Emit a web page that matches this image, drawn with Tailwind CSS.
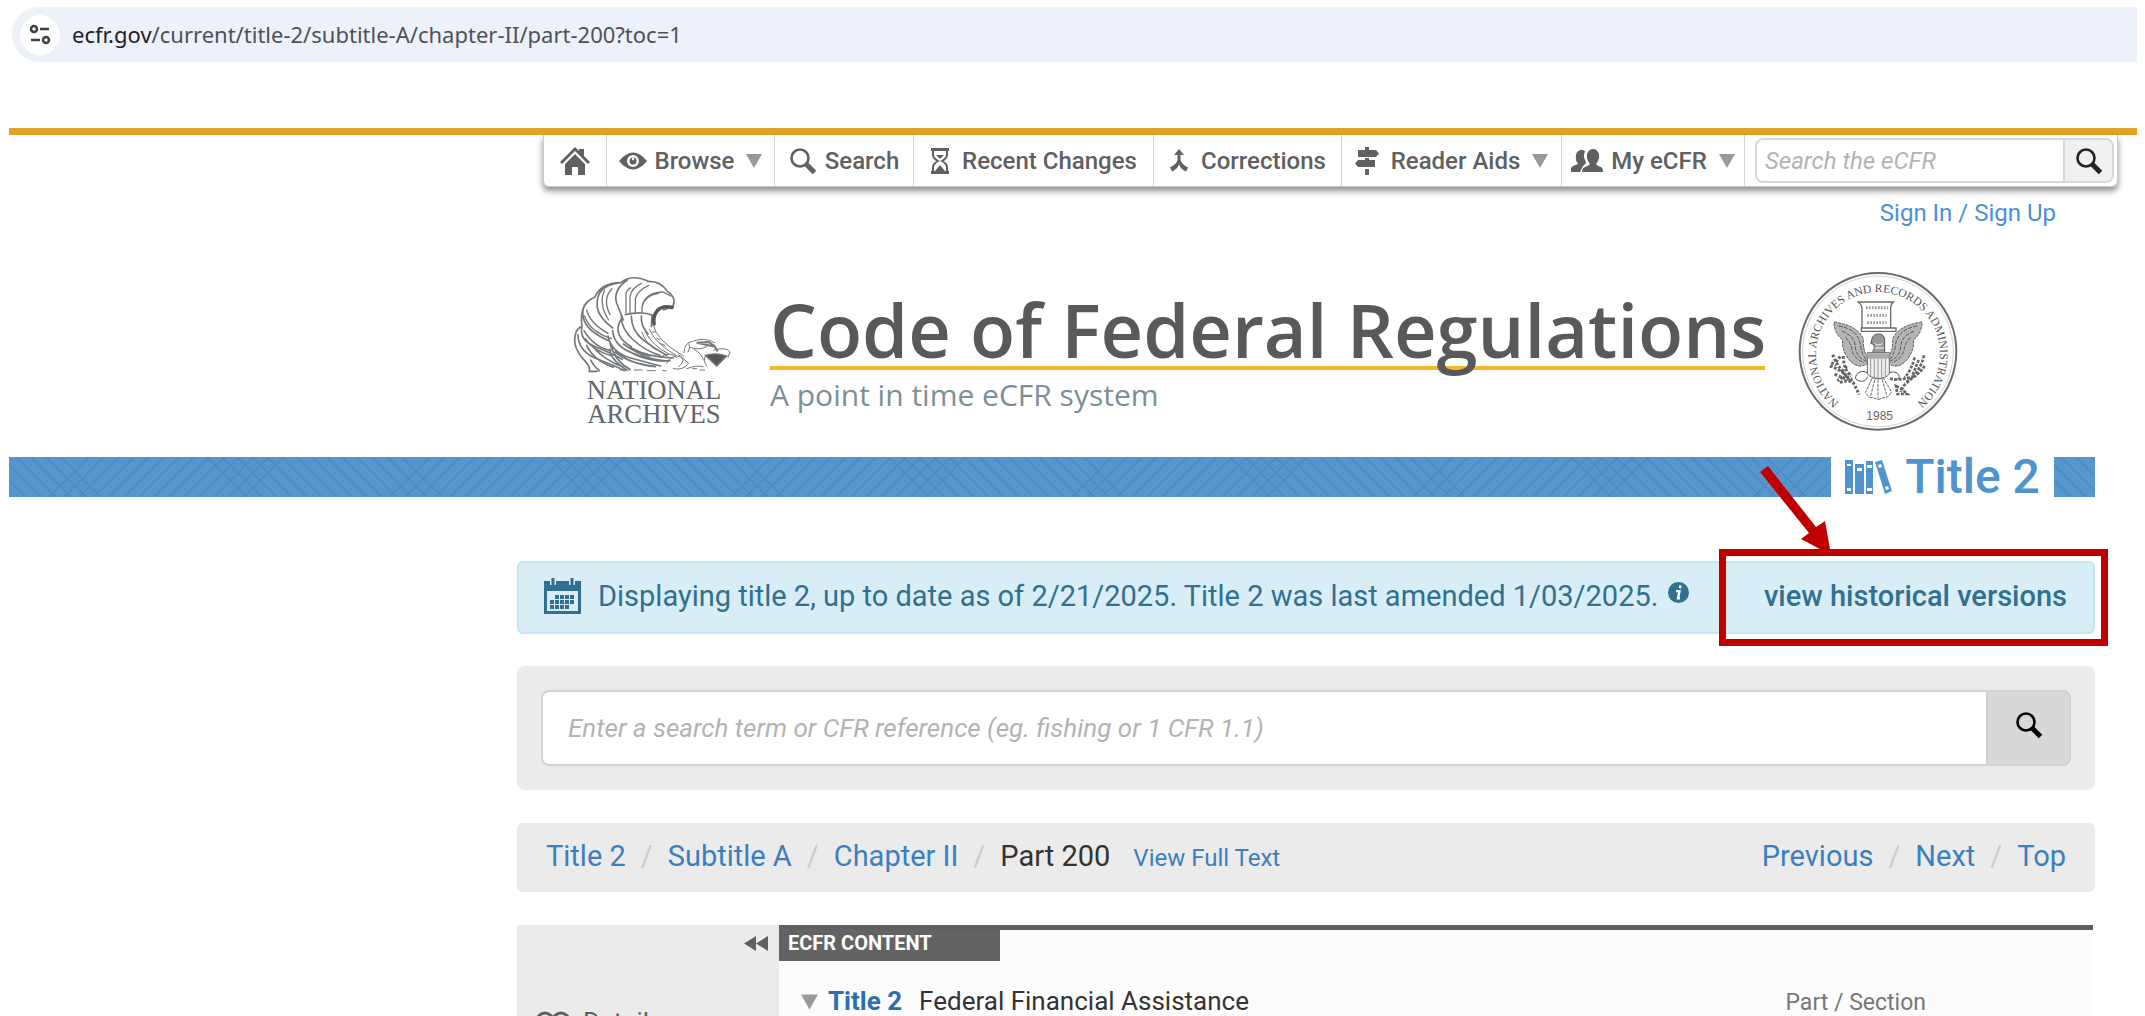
<!DOCTYPE html>
<html lang="en">
<head>
  <meta charset="UTF-8">
  <title>eCFR :: 2 CFR Part 200</title>
  <script src="https://cdn.jsdelivr.net/npm/@tailwindcss/browser@4"></script>
</head>
<body class="bg-white font-['Roboto',sans-serif] h-screen overflow-hidden">
  <!-- Shared icons and band pattern -->
  <svg class="absolute size-0" aria-hidden="true">
    <symbol id="search" viewBox="0 0 28 28">
      <circle cx="11" cy="11" r="8.5" fill="none" stroke="currentColor" stroke-width="2.6"/>
      <path d="M17 17l8.500 8.500" fill="none" stroke="currentColor" stroke-width="5"/>
    </symbol>
    <symbol id="caret" viewBox="0 0 16 14"><path d="M0 0h16L8 14z" fill="currentColor"/></symbol>
    <pattern id="weave" width="341" height="40" patternUnits="userSpaceOnUse">
      <rect width="341" height="40" fill="#5596cf"/>
      <path stroke="#4c8ac2" stroke-width="1.500" fill="none" d="M198 0l40 40M213 0l40 40M228 0l40 40M243 0l40 40M258 0l40 40M273 0l40 40M288 0l40 40M303 0l40 40M318 0l40 40M333 0l40 40M-23 0l40 40M-8 0l40 40M-38 0l40 40M7 0l40 40M22 0l40 40M37 0l40 40M52 0l40 40M80 0l-40 40M95 0l-40 40M110 0l-40 40M125 0l-40 40M140 0l-40 40M155 0l-40 40M170 0l-40 40M185 0l-40 40M200 0l-40 40M215 0l-40 40M230 0l-40 40M245 0l-40 40M260 0l-40 40M275 0l-40 40"/>
    </pattern>
  </svg>

  <!-- Address bar -->
  <div class="mt-[7px] ml-3 mr-2 h-[55px] bg-[#ecf1fa] rounded-l-full flex items-center gap-3 pl-2">
    <span class="size-10 rounded-full bg-white flex items-center justify-center">
      <svg class="size-6" viewBox="0 0 24 24" fill="none" stroke="#3c3f43" stroke-width="2.500">
        <circle cx="6" cy="6" r="3"/><path d="M12 6h9M3 17h9"/><circle cx="18" cy="17" r="3"/>
      </svg>
    </span>
    <p class="font-['Noto_Sans',sans-serif] text-[22px] text-[#4d5156]"><span class="text-[#1f2023]">ecfr.gov</span>/current/title-2/subtitle-A/chapter-II/part-200?toc=1</p>
  </div>

  <header class="mt-[66px] ml-[9px]">
    <div class="h-[7px] mr-2 bg-[#e2a225]"></div>
    <nav class="flex justify-end pr-[27px]">
      <div class="flex h-[52px] bg-white rounded-b-md border border-t-0 border-[#ccc] shadow-[0_4px_6px_rgba(0,0,0,0.450)] text-2xl font-medium text-[#606060] divide-x divide-[#d4d4d4]">
        <a href="#" aria-label="Home" class="w-[63px] flex items-center justify-center">
          <svg class="size-8" viewBox="0 0 32 32" fill="currentColor"><path d="M16 2l4 4V4h5v7l6 6-2 2L16 6 3 19l-2-2z"/><path d="M16 9l10 10v11h-7v-8h-6v8H6V19z"/></svg>
        </a>
        <a href="#" class="w-[168px] flex items-center justify-center gap-2">
          <svg class="w-7 h-6" viewBox="0 0 28 24"><path d="M0 12Q14-5 28 12Q14 29 0 12z" fill="currentColor"/><circle cx="14" cy="12" r="6" fill="#fff"/><circle cx="14" cy="12" r="3.500" fill="currentColor"/><circle cx="14" cy="10" r="1.200" fill="#fff"/></svg>
          Browse
          <svg class="w-4 h-3.5 ml-1 text-[#999]"><use href="#caret"/></svg>
        </a>
        <a href="#" class="w-[139px] flex items-center justify-center gap-2"><svg class="size-7"><use href="#search"/></svg>Search</a>
        <a href="#" class="w-[240px] flex items-center justify-center gap-3">
          <svg class="w-5 h-7" viewBox="0 0 20 28" fill="none" stroke="currentColor"><path d="M1 2.500h18M1 25.500h18" stroke-width="3"/><path d="M3 4v4q0 3 5 6q-5 3-5 6v4M17 4v4q0 3-5 6q5 3 5 6v4" stroke-width="2"/><path d="M6 8h8l-4 4zM10 18l5 6H5z" fill="currentColor" stroke="none"/></svg>
          Recent Changes
        </a>
        <a href="#" class="w-[188px] flex items-center justify-center gap-3">
          <svg class="w-5 h-6" viewBox="0 0 20 24"><path d="M10 0l5 6h-3.500v5q1 4 7.500 7.500l-2 4q-5-2-7-7q-2 5-7 7l-2-4Q7.500 15 8.500 11V6H5z" fill="currentColor"/></svg>
          Corrections
        </a>
        <a href="#" class="w-[220px] flex items-center justify-center gap-3">
          <svg class="w-6 h-7" viewBox="0 0 24 28" fill="currentColor"><path d="M10 0h4v3h-4zM3 3h18l3 3.500-3 3.500H3zM10 11h4v2h-4zM3 13h17v7H3l-3-3.500zM10 22h4v6h-4z"/></svg>
          Reader Aids
          <svg class="w-4 h-3.5 text-[#999]"><use href="#caret"/></svg>
        </a>
        <a href="#" class="w-[183px] flex items-center justify-center gap-2">
          <svg class="w-8 h-6" viewBox="0 0 32 24" fill="currentColor"><path d="M0 23v-4q1-2 7-4q-3-4-2-9q1-5 6-5q2 0 3 1q-2 5 0 9q1 2 1 3l-3 3-3 6z"/><path d="M11 23q0-4 3-5q4-1 5-3q-4-5-3-10q2-5 6-5t6 5q1 5-3 10q1 2 5 3q2 1 2 5z"/></svg>
          My eCFR
          <svg class="w-4 h-3.5 ml-1 text-[#999]"><use href="#caret"/></svg>
        </a>
        <form class="flex py-[3px] pl-[10px] pr-[3px]">
          <input type="text" aria-label="Search the eCFR" placeholder="Search the eCFR" class="w-[310px] border-2 border-[#d8d8d8] rounded-l-lg px-2 font-normal italic placeholder:text-[#b3b3b3] min-w-0">
          <button type="button" aria-label="Search" class="w-[49px] border-2 border-l-0 border-[#d8d8d8] rounded-r-lg bg-[#f0f0f0] text-[#222] flex items-center justify-center"><svg class="size-7"><use href="#search"/></svg></button>
        </form>
      </div>
    </nav>
    <p class="mt-[10px] text-right pr-[89px] text-2xl text-[#4a90d2]"><a href="#">Sign In</a> / <a href="#">Sign Up</a></p>

    <div class="mt-[31px] flex justify-end pr-[165px]">
      <!-- National Archives eagle -->
      <svg class="w-[200px] h-[180px]" viewBox="0 0 600 540" fill="none" stroke="#75787b" stroke-width="4" stroke-linecap="round">
        <path stroke-width="5" d="M112 334H88q4-12-12-30Q36 262 46 224q4-20 20-24Q56 132 104 112Q124 68 182 68Q214 42 262 62M262 64q40-2 60 30q30 20 16 46l-28 10M182 68Q104 76 112 142q4 30 46 62M202 60Q158 90 170 130l20 50M104 112Q60 130 70 174q10 40 76 68M66 200q-10 40 40 60t80 38M54 224q0 50 60 74t80 34"/>
        <path d="M210 158V110q4-26 34-40M226 160v-44q6-24 40-40M198 158V100q6-14 14-16M246 156q-4-56 62-60l24 12M246 140q8-34 50-40M156 86q-30 30-6 78M134 90q-20 40 12 90M80 150q10 40 64 70M74 168q14 46 80 68"/>
        <path stroke-width="5" d="M196 164q50-12 82 2M184 166q-2 40 36 74t80 46M214 168q0 44 36 72t70 46M244 168q-2 30 20 54M276 166l-2 34M184 176q-30 50 30 84"/>
        <path stroke="#55585b" stroke-width="11" d="M336 142q-30-6-44 10t-10 40"/>
        <path stroke-width="3" d="M280 196q8 44 90 92M268 208q16 40 80 78M256 216q20 40 70 66M276 216h10M290 234l10 6M262 226l8 10M300 250l14 6M246 216q10 34 40 52"/>
        <path stroke-width="5" d="M144 228q10 50 68 66t90 24M158 212q4 54 80 74t90 16M150 250q16 56 60 78M166 276q40 34 120 44M150 268q0 30 50 62M210 262q50 30 130 32M220 282q60 26 110 20M190 252q40 30 80 36M100 262q30 36 90 60M72 212q30 50 80 60M76 236q20 34 80 52M80 256q20 44 80 66M92 300q10 20 26 32"/>
        <path stroke-width="3" d="M180 330h28M222 330h24M262 332h24M308 332h10M320 310q20-30 40-20t-4 30M300 292q30-20 50 0M340 326q30 6 44-14M356 284l30 26M372 278q0-30 26-34q36-14 66 4M384 250q10 6 0 26M390 262q26 10 50-2M402 268q24 12 28 32M380 326q30-12 50-6M398 326h12M420 330h14"/>
        <path stroke-width="6" d="M410 248l56 12-20-14zM464 260l8 12"/>
        <path d="M436 286q32-10 64 2l-30 30z" fill="#55585b"/><path stroke-width="3" d="M462 270q40-10 48 6l-6 16M436 288q-8 14 4 30"/>
        <text x="282" y="416" text-anchor="middle" font-family="Liberation Serif, serif" font-size="80" fill="#63666a" stroke="none">NATIONAL</text>
        <text x="282" y="489" text-anchor="middle" font-family="Liberation Serif, serif" font-size="80" fill="#63666a" stroke="none">ARCHIVES</text>
      </svg>

      <div class="ml-[10px] pt-[33px] w-[995px] whitespace-nowrap">
        <h1 class="font-['Open_Sans',sans-serif] font-semibold text-[74px] leading-[73px] text-[#58595b] border-b-4 border-[#f9b52c]">Code of Federal Regulations</h1>
        <p class="mt-1 font-['Open_Sans',sans-serif] text-[30px] leading-[42px] text-[#7b8f96]">A point in time eCFR system</p>
      </div>

      <!-- Agency seal -->
      <svg class="ml-[15px] w-[200px] h-[190px] -mt-1 -mb-[6px]" viewBox="0 0 600 570" fill="none" stroke="#6b6b6b" stroke-width="3">
        <circle cx="294" cy="286" r="235" stroke-width="6"/><circle cx="294" cy="286" r="226" stroke="#bbb" stroke-width="2"/>
        <path id="ring" d="M195 452A186 186 0 1 1 393 452" stroke="none"/>
        <text font-family="Liberation Serif, serif" font-size="35" fill="#555" stroke="none"><textPath href="#ring" startOffset="50%" text-anchor="middle">NATIONAL ARCHIVES AND RECORDS ADMINISTRATION</textPath></text>
        <text x="299" y="492" text-anchor="middle" font-family="Liberation Sans, sans-serif" font-size="36" fill="#666" stroke="none">1985</text>
        <path d="M232 138h108q-10 10-8 24v52M246 214v-54q0-16-14-22M244 216h104v10H244z" stroke-width="4"/>
        <path d="M258 155h66M262 178h58M262 200h58" stroke="#999" stroke-width="8" stroke-dasharray="5 4"/>
        <path d="M162 198q70 10 88 50q-2 36 14 56v18q-30 20-56-10q-24-30-20-60q-26-20-26-54zM426 198q-70 10-88 50q2 36-14 56v18q30 20 56-10q24-30 20-60q26-20 26-54z" fill="#b5b5b5" stroke="#555" stroke-dasharray="9 3"/>
        <path d="M176 210q60 10 66 60q4 30 20 44M186 226q40 14 40 50q6 30 34 40M196 244q20 20 20 40q10 26 36 36M412 210q-60 10-66 60q-4 30-20 44M402 226q-40 14-40 50q-6 30-34 40M392 244q-20 20-20 40q-10 26-36 36" stroke="#555" stroke-dasharray="12 4"/>
        <path d="M276 248q4-14 20-14t18 16v42h-38q10-16 6-26l-10-4z" fill="#999" stroke="#555"/><path d="M284 262q10 10 24 0M284 276h28" stroke="#fff"/>
        <path d="M262 290h66v64q-10 12-33 14q-23-2-33-14z" fill="#eee"/><path d="M262 292h66v16h-66z" fill="#aaa" stroke="none"/><path d="M272 308v52M283 308v56M294 308v58M305 308v56M316 308v52" stroke="#999"/>
        <path d="M276 368l-20 42 12 14 14 2 12 5 14-5 16-4 10-14-22-40zM284 372l-12 48M294 370v58M306 370l14 46" stroke-dasharray="10 3"/>
        <path d="M262 350q-20-10-32 6t14 20q16 0 18-14M328 350q20-6 28 6t-14 18" stroke="#555"/>
        <path d="M158 296q20 50 60 80l20 40M190 300q0 40 24 60M150 330q30 10 50 30M164 354q30 16 54 16M180 380q20-10 40 0M168 318l14-18M154 320l14 8M200 330l-14 16M210 350l-12 16M188 364l-16 10" stroke="#666" stroke-width="9" stroke-dasharray="8 5"/>
        <path d="M432 298q-10 50-60 90l-10 20M404 304q-10 40-30 60M434 330q-20 30-60 50M416 312l-20 50M330 368q30 6 70-6M348 390q20 10 34 24h-30z" stroke="#666" stroke-width="8" stroke-dasharray="9 4"/>
      </svg>
    </div>
  </header>

  <!-- Title band -->
  <div class="mt-[17px] ml-[9px] mr-[50px] flex items-center h-10">
    <svg class="flex-1 h-10"><rect width="100%" height="40" fill="url(#weave)"/></svg>
    <h2 class="w-[223px] flex items-center justify-center gap-3 text-[48px] leading-10 font-medium text-[#4f93cf] whitespace-nowrap">
      <svg class="w-12 h-[34px] shrink-0" viewBox="0 0 48 34"><path fill="currentColor" d="M0 0h8v34H0zM10 4h9v30h-9zM21 1h7v33h-7zM30 2l7-2 10 31-7 3z"/><path fill="#fff" d="M2 4h4v2H2zM2 28h4v3H2zM12 8h5v3h-5zM22 5h5v3h-5zM22 28h5v3h-5zM33 5l3-1 1 3-3 1zM40 27l3-1 1 3-3 1z"/></svg>
      Title 2
    </h2>
    <svg class="w-[41px] h-10"><rect width="41" height="40" fill="url(#weave)"/></svg>
  </div>

  <main class="ml-[517px] mr-[50px]">
    <div class="relative mt-16 h-[73px] pl-[25px] pr-[26px] pb-0.5 flex items-center rounded-md border-2 border-[#c3e8f1] bg-[#d9edf7] text-[#31708f] text-[29px] whitespace-nowrap">
      <svg class="w-[37px] h-9 mr-[17px] mb-0.5" viewBox="0 0 37 36"><path d="M0 3h37v33H0z" fill="currentColor"/><path d="M3 13h31v20H3z" fill="#d9edf7"/><path d="M9 0v7M28 0v7" stroke="#d9edf7" stroke-width="6"/><path d="M9 0v8M28 0v8" stroke="currentColor" stroke-width="3"/><path d="M6 29h20M6 24h25M11 19h20" stroke="currentColor" stroke-width="4" stroke-dasharray="4 1"/></svg>
      <span>Displaying title 2, up to date as of 2/21/2025. Title 2 was last amended 1/03/2025.</span>
      <svg class="size-[21px] ml-[10px] mb-2" viewBox="0 0 22 22"><circle cx="11" cy="11" r="11" fill="currentColor"/><path d="M13 3.500l-.5 3M8.500 9.500H12l-1.500 7.500h2" fill="none" stroke="#fff" stroke-width="2.500"/></svg>
      <a href="#" class="ml-auto font-medium">view historical versions</a>

      <!-- Callout -->
      <div class="absolute -top-[14px] -right-[15px] w-[389px] h-[97px] border-[7px] border-[#c00000]"></div>
      <svg class="absolute -top-[100px] right-[258px] w-[80px] h-[92px]" viewBox="0 0 80 92" fill="#c00000"><path d="M13 3L61 64 70 58 76 92 46 76 54 70 5 9z"/></svg>
    </div>

    <form class="mt-8 h-[124px] bg-[#ebebeb] rounded-lg px-6 py-6 flex">
      <input type="text" aria-label="Search term or CFR reference" placeholder="Enter a search term or CFR reference (eg. fishing or 1 CFR 1.1)" class="flex-1 min-w-0 bg-white border-2 border-r-0 border-[#d3d3d3] rounded-l-lg px-[25px] text-[26px] italic placeholder:text-[#b3b3b3]">
      <button type="button" aria-label="Search" class="w-[85px] bg-[#d8d8d8] border-2 border-[#d0d0d0] rounded-r-lg flex items-center justify-center text-black"><svg class="size-7 mb-1.5"><use href="#search"/></svg></button>
    </form>

    <nav class="mt-[33px] h-[69px] bg-[#ebebeb] rounded-md px-[29px] pb-0.5 flex items-center text-[29px] text-[#ccc] whitespace-nowrap">
      <div class="flex items-baseline gap-[15px]">
        <a href="#" class="text-[#3b7fbf]">Title 2</a><span>/</span>
        <a href="#" class="text-[#3b7fbf]">Subtitle A</a><span>/</span>
        <a href="#" class="text-[#3b7fbf]">Chapter II</a><span>/</span>
        <span class="text-[#333]">Part 200</span>
        <a href="#" class="ml-2 text-2xl text-[#3b7fbf]">View Full Text</a>
      </div>
      <div class="ml-auto flex gap-[15px]">
        <a href="#" class="text-[#3b7fbf]">Previous</a><span>/</span>
        <a href="#" class="text-[#3b7fbf]">Next</a><span>/</span>
        <a href="#" class="text-[#3b7fbf]">Top</a>
      </div>
    </nav>

    <div class="mt-[33px] flex">
      <aside class="w-[262px] shrink-0 bg-[#ebebeb] text-[#606060]">
        <button type="button" aria-label="Collapse sidebar" class="block ml-auto mr-[11px] mt-[11px]"><svg class="w-6 h-[15px]" viewBox="0 0 24 15" fill="currentColor"><path d="M12 0v15L0 7.500zM24 0v15L12 7.500z"/></svg></button>
        <a href="#" class="mt-[52px] ml-[18px] flex items-center gap-3 text-[26px]">
          <svg class="w-9 h-6" viewBox="0 0 36 24" fill="none" stroke="currentColor" stroke-width="3"><circle cx="10" cy="10" r="8"/><circle cx="26" cy="10" r="8"/></svg>
          Details
        </a>
      </aside>
      <section class="flex-1 mr-0.5 bg-[#fcfcfc] border-t-[5px] border-[#606060]">
        <h3 class="w-[221px] h-[31px] pl-[9px] bg-[#636363] text-white text-xl leading-[26px] font-bold">ECFR CONTENT</h3>
        <div class="mt-[20px] pl-[22px] flex items-baseline text-[26px] leading-[40px]">
          <svg class="w-[17px] h-4 mr-[10px] text-[#999]"><use href="#caret"/></svg>
          <a href="#" class="font-bold text-[#2b6fae] mr-[17px]">Title 2</a>
          <span class="text-[#333]">Federal Financial Assistance</span>
          <span class="ml-auto mr-[167px] text-[23px] text-[#777]">Part / Section</span>
        </div>
      </section>
    </div>
  </main>
</body>
</html>
